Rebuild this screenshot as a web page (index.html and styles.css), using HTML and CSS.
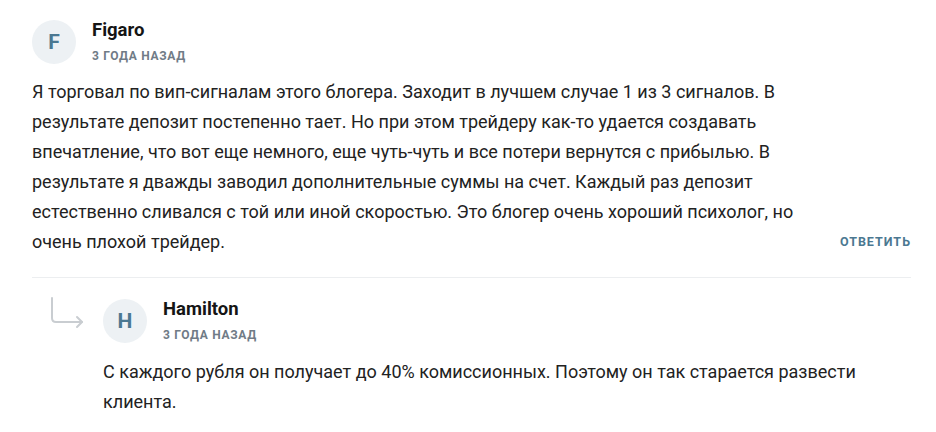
FILE: index.html
```html
<!DOCTYPE html>
<html lang="ru">
<head>
<meta charset="utf-8">
<link rel="stylesheet" href="styles.css">
</head>
<body>
<div class="comments">
  <div class="comment">
    <div class="head">
      <div class="avatar">F</div>
      <div class="meta">
        <div class="name">Figaro</div>
        <div class="date">3 года назад</div>
      </div>
    </div>
    <div class="body-row">
      <p class="text">Я торговал по вип-сигналам этого блогера. Заходит в лучшем случае 1 из 3 сигналов. В результате депозит постепенно тает. Но при этом трейдеру как-то удается создавать впечатление, что вот еще немного, еще чуть-чуть и все потери вернутся с прибылью. В результате я дважды заводил дополнительные суммы на счет. Каждый раз депозит естественно сливался с той или иной скоростью. Это блогер очень хороший психолог, но очень плохой трейдер.</p>
      <a class="reply">Ответить</a>
    </div>
  </div>
  <div class="reply-block">
    <svg class="reply-arrow" width="36" height="34" viewBox="0 0 36 34" fill="none" stroke="#c9cdd1" stroke-width="2" stroke-linecap="round" stroke-linejoin="round">
      <path d="M3 1 V21 Q3 25 7 25 H33"/>
      <path d="M28 20 L33 25 L28 30"/>
    </svg>
    <div class="comment child">
      <div class="head">
        <div class="avatar">H</div>
        <div class="meta">
          <div class="name">Hamilton</div>
          <div class="date">3 года назад</div>
        </div>
      </div>
      <p class="text">С каждого рубля он получает до 40% комиссионных. Поэтому он так старается развести клиента.</p>
    </div>
  </div>
</div>
</body>
</html>
```
FILE: styles.css
```css
html, body {
  margin: 0;
  padding: 0;
  background: #ffffff;
}
body {
  font-family: Roboto, "Noto Sans", sans-serif;
  color: #1f1f1f;
}
.comments {
  width: 879px;
  padding: 18px 0 0 32px;
}
.comment {
  padding-bottom: 20px;
  border-bottom: 1px solid #eceef0;
}
.head {
  display: flex;
  align-items: center;
  gap: 16px;
}
.avatar {
  width: 44px;
  height: 44px;
  border-radius: 50%;
  background: #edf1f4;
  color: #4b7891;
  font-weight: 700;
  font-size: 21px;
  display: flex;
  align-items: center;
  justify-content: center;
}
.meta {
  display: flex;
  flex-direction: column;
}
.name {
  font-weight: 700;
  font-size: 18.5px;
  line-height: 24px;
  color: #151515;
}
.date {
  font-weight: 700;
  font-size: 12px;
  letter-spacing: 0.7px;
  text-transform: uppercase;
  color: #707b86;
  line-height: 18px;
  margin-top: 5px;
}
.body-row {
  display: flex;
  align-items: flex-end;
  justify-content: space-between;
  margin-top: 12px;
}
.text {
  margin: 0;
  font-size: 18px;
  line-height: 30px;
  color: #222222;
  width: 790px;
}
.reply {
  font-size: 12.5px;
  font-weight: 700;
  letter-spacing: 1px;
  text-transform: uppercase;
  color: #4b7891;
  line-height: 20px;
  margin-bottom: 5px;
}
.reply-block {
  display: flex;
  padding: 19px 0 0 17px;
  gap: 18px;
}
.reply-arrow {
  flex: none;
  margin-top: 0;
}
.child {
  border-bottom: none;
  padding-bottom: 0;
}
.child .text {
  margin-top: 13px;
  width: 780px;
}
```
